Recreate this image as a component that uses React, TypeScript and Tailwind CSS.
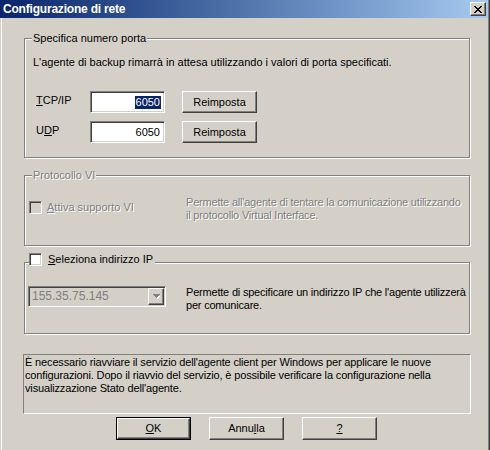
import React from 'react';

// classic 3d edges
const sunken =
    'border border-t-[#808080] border-l-[#808080] border-b-white border-r-white shadow-[inset_1px_1px_0_#404040,inset_-1px_-1px_0_#d4d0c8]';
const raised =
    'border border-t-white border-l-white border-b-[#404040] border-r-[#404040] shadow-[inset_-1px_-1px_0_#808080]';
const etched = 'relative border border-[#808080] shadow-[inset_1px_1px_0_#fff,1px_1px_0_#fff]';
const disabledText = 'text-[#808080] [text-shadow:1px_1px_0_#ffffff]';

const Btn: React.FC<{ children: React.ReactNode; isDefault?: boolean; h?: string }> = ({ children, isDefault, h = 'h-[22px]' }) =>
    isDefault ? (
        <div className="w-[75px] h-[23px] border border-black">
            <div className={`w-full h-full flex items-center justify-center ${raised}`}>{children}</div>
        </div>
    ) : (
        <div className={`w-[75px] ${h} flex items-center justify-center ${raised}`}>{children}</div>
    );

const Check: React.FC<{ disabled?: boolean }> = ({ disabled }) => (
    <div className={`w-[13px] h-[13px] shrink-0 ${sunken} ${disabled ? 'bg-[#d4d0c8]' : 'bg-white'}`} />
);

export default function App() {
    return (
        <div className="w-[490px] h-[450px] overflow-hidden bg-[#d4d0c8] text-[11px] leading-[13px] text-black font-['Liberation_Sans',Arial,sans-serif] shadow-[inset_1px_0_0_#d4d0c8,inset_2px_0_0_#fff,inset_-1px_0_0_#404040,inset_-2px_0_0_#808080]">
            {/* Title bar */}
            <div className="h-[18px] mr-[2px] flex items-center justify-between pl-[3px] pr-[2px] bg-gradient-to-r from-[#0a246a] to-[#a6caf0]">
                <span className="text-white font-bold text-[12px] tracking-[-0.2px]">Configurazione di rete</span>
                <div className={`w-[16px] h-[14px] bg-[#d4d0c8] flex items-center justify-center ${raised}`}>
                    <svg width="8" height="7" viewBox="0 0 8 7" shapeRendering="crispEdges">
                        <path d="M0 0h2v1h-2zM6 0h2v1h-2zM1 1h2v1h-2zM5 1h2v1h-2zM2 2h4v1h-4zM3 3h2v1h-2zM2 4h4v1h-4zM1 5h2v1h-2zM5 5h2v1h-2zM0 6h2v1h-2zM6 6h2v1h-2z" fill="#000" />
                    </svg>
                </div>
            </div>

            <div className="pl-[24px] pr-[20px] whitespace-nowrap">
                {/* Porte */}
                <div className={`${etched} mt-[20px] h-[120px] pt-[17px]`}>
                    <span className="absolute left-[7px] -top-[7px] px-[1px] bg-[#d4d0c8]">Specifica numero porta</span>
                    <div className="pl-[8px]">L'agente di backup rimarrà in attesa utilizzando i valori di porta specificati.</div>

                    <div className="flex items-center mt-[22px] ml-[11px]">
                        <span className="w-[54px] -mt-[3px]"><u>T</u>CP/IP</span>
                        <div className={`w-[75px] h-[22px] bg-white flex items-center justify-end pr-[3px] ${sunken}`}>
                            <span className="bg-[#0a246a] text-white px-[1px]">6050</span>
                        </div>
                        <div className="ml-[17px]"><Btn>Reimposta</Btn></div>
                    </div>
                    <div className="flex items-center mt-[8px] ml-[11px]">
                        <span className="w-[54px] -mt-[3px]">U<u>D</u>P</span>
                        <div className={`w-[75px] h-[22px] bg-white flex items-center justify-end pr-[4px] ${sunken}`}>
                            <span>6050</span>
                        </div>
                        <div className="ml-[17px]"><Btn>Reimposta</Btn></div>
                    </div>
                </div>

                {/* Protocollo VI */}
                <div className={`${etched} mt-[17px] h-[71px] pt-[20px] flex`}>
                    <span className={`absolute left-[7px] -top-[7px] px-[1px] bg-[#d4d0c8] ${disabledText}`}>Protocollo VI</span>
                    <div className="w-[161px] shrink-0 pl-[4px] pt-[5px] flex items-center gap-[5px] self-start">
                        <Check disabled />
                        <span className={disabledText}><u>A</u>ttiva supporto VI</span>
                    </div>
                    <div className={`${disabledText} tracking-[-0.2px]`}>
                        Permette all'agente di tentare la comunicazione utilizzando
                        <br />
                        il protocollo Virtual Interface.
                    </div>
                </div>

                {/* Indirizzo IP */}
                <div className={`${etched} mt-[16px] h-[72px] pt-[23px] flex items-start`}>
                    <div className="absolute left-[4px] -top-[10px] pr-[2px] bg-[#d4d0c8] flex items-center gap-[6px]">
                        <Check />
                        <span><u>S</u>eleziona indirizzo IP</span>
                    </div>
                    <div className={`ml-[3px] w-[138px] h-[21px] shrink-0 bg-[#d4d0c8] flex items-center justify-between pl-[3px] ${sunken}`}>
                        <span className="text-[#808080] text-[12px]">155.35.75.145</span>
                        <div className={`w-[16px] h-[17px] mr-[1px] flex items-center justify-center ${raised}`}>
                            <svg width="7" height="5" viewBox="0 0 7 5" shapeRendering="crispEdges">
                                <path d="M1 1h5v1h-5zM2 2h3v1h-3zM3 3h1v1h-1z" fill="#ffffff" transform="translate(1 1)" />
                                <path d="M0 0h7v1h-7zM1 1h5v1h-5zM2 2h3v1h-3zM3 3h1v1h-1z" fill="#808080" />
                            </svg>
                        </div>
                    </div>
                    <div className="ml-[20px] tracking-[-0.2px]">
                        Permette di specificare un indirizzo IP che l'agente utilizzerà
                        <br />
                        per comunicare.
                    </div>
                </div>

                {/* Info */}
                <div className="mt-[20px] -ml-[1px] w-[448px] h-[60px] border border-t-[#808080] border-l-[#808080] border-b-white border-r-white pl-[1px] pt-[1px] tracking-[-0.15px]">
                    È necessario riavviare il servizio dell'agente client per Windows per applicare le nuove
                    <br />
                    configurazioni. Dopo il riavvio del servizio, è possibile verificare la configurazione nella
                    <br />
                    visualizzazione Stato dell'agente.
                </div>

                {/* Buttons */}
                <div className="flex gap-[18px] pl-[92px] mt-[3px]">
                    <Btn isDefault><u>O</u>K</Btn>
                    <Btn h="h-[23px]">Annu<u>l</u>la</Btn>
                    <Btn h="h-[23px]"><u>?</u></Btn>
                </div>
            </div>
        </div>
    );
}
